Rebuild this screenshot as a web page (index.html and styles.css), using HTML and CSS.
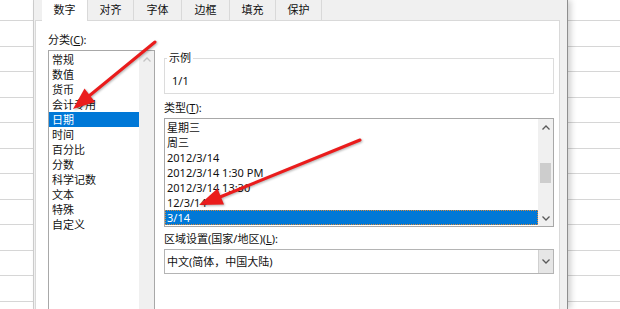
FILE: index.html
```html
<!DOCTYPE html>
<html>
<head>
    <title>设置单元格格式</title>
    <link rel="stylesheet" href="styles.css">
</head>
<body>
    <div class="sheet sheet-left"></div>

    <div class="dialog">
        <div class="tabs">
            <div class="tab active">数字</div>
            <div class="tab">对齐</div>
            <div class="tab wide">字体</div>
            <div class="tab wide">边框</div>
            <div class="tab">填充</div>
            <div class="tab">保护</div>
        </div>

        <div class="panel">
            <div class="col-left">
                <div class="label">分类(<u>C</u>):</div>
                <div class="listbox category">
                    <div class="items">
                        <div class="item">常规</div>
                        <div class="item">数值</div>
                        <div class="item">货币</div>
                        <div class="item">会计专用</div>
                        <div class="item selected">日期</div>
                        <div class="item">时间</div>
                        <div class="item">百分比</div>
                        <div class="item">分数</div>
                        <div class="item">科学记数</div>
                        <div class="item">文本</div>
                        <div class="item">特殊</div>
                        <div class="item">自定义</div>
                    </div>
                    <div class="scrollbar disabled">
                        <div class="sb-btn">
                            <svg width="8" height="5" viewBox="0 0 8 5"><polyline points="0.5,4.5 4,1 7.5,4.5"/></svg>
                        </div>
                    </div>
                </div>
            </div>

            <div class="col-right">
                <fieldset class="sample">
                    <legend>示例</legend>
                    <div class="sample-value">1/1</div>
                </fieldset>

                <div class="label gap-top">类型(<u>T</u>):</div>
                <div class="listbox types">
                    <div class="items">
                        <div class="item">星期三</div>
                        <div class="item">周三</div>
                        <div class="item">2012/3/14</div>
                        <div class="item">2012/3/14 1:30 PM</div>
                        <div class="item">2012/3/14 13:30</div>
                        <div class="item">12/3/14</div>
                        <div class="item selected focused">3/14</div>
                    </div>
                    <div class="scrollbar">
                        <div class="sb-btn">
                            <svg width="8" height="5" viewBox="0 0 8 5"><polyline points="0.5,4.5 4,1 7.5,4.5"/></svg>
                        </div>
                        <div class="sb-track">
                            <div class="sb-thumb" style="margin-top: 28px; height: 20px;"></div>
                        </div>
                        <div class="sb-btn">
                            <svg width="8" height="5" viewBox="0 0 8 5"><polyline points="0.5,0.5 4,4 7.5,0.5"/></svg>
                        </div>
                    </div>
                </div>

                <div class="label gap-top-small">区域设置(国家/地区)(<u>L</u>):</div>
                <div class="combo">
                    <div class="combo-text">中文(简体，中国大陆)</div>
                    <div class="combo-btn">
                        <svg width="8" height="5" viewBox="0 0 8 5"><polyline points="0.5,0.5 4,4 7.5,0.5"/></svg>
                    </div>
                </div>
            </div>
        </div>
    </div>

    <div class="sheet sheet-right"></div>

    <!-- red annotation arrows drawn over the screenshot -->
    <svg class="annotations" width="620" height="309" viewBox="0 0 620 309">
        <line x1="155" y1="42" x2="89" y2="96"/>
        <polygon points="73,109 95,102 84.5,88.5"/>
        <line x1="360" y1="140" x2="220" y2="197"/>
        <polygon points="199,205 224,204.5 217.5,188.5"/>
    </svg>
</body>
</html>
```

FILE: styles.css
```css
* {
    box-sizing: border-box;
}
body {
    margin: 0;
    width: 620px;
    height: 309px;
    overflow: hidden;
    display: flex;
    position: relative;
    background: #fff;
    color: #111;
    font-family: "Noto Sans", "Noto Sans CJK SC", sans-serif;
    font-size: 11px;
}
.sheet {
    height: 100%;
    background: repeating-linear-gradient(to bottom, transparent 0 24.5px, #d6d6d6 24.5px 25.5px);
    background-position: 0 -4px;
}
.sheet-left {
    width: 34px;
    border-right: 1px solid #d0d0d0;
}
.sheet-right {
    flex: 1;
}
.dialog {
    width: 534px;
    height: 100%;
    display: flex;
    flex-direction: column;
    background: #f0f0f0;
    border-right: 1px solid #8e8e8e;
    padding: 0 6px 0 1px;
    box-shadow: 3px 0 6px rgba(0, 0, 0, 0.18);
    z-index: 1;
}
.tabs {
    display: flex;
    height: 20px;
    padding-left: 7px;
}
.tab {
    width: 46px;
    height: 20px;
    line-height: 20px;
    text-align: center;
    border-right: 1px solid #d9d9d9;
    background: #f0f0f0;
}
.tab.wide {
    width: 48px;
}
.tab.active {
    background: #fff;
    height: 21px;
    position: relative;
    z-index: 2;
}
.panel {
    flex: 1;
    width: 525px;
    background: #fff;
    border: 1px solid #d9d9d9;
    border-bottom: none;
    padding: 12px 4px 0 12px;
    display: grid;
    grid-template-columns: 107px 390px;
    column-gap: 9px;
    align-items: start;
}
.label {
    line-height: 14px;
    margin-bottom: 3px;
    white-space: nowrap;
}
.label.gap-top {
    margin-top: 7px;
}
.label.gap-top-small {
    margin-top: 5px;
}
.listbox {
    display: flex;
    border: 1px solid #a8a8a8;
    background: #fff;
}
.listbox.category {
    height: 259px;
    border-bottom: none;
}
.listbox.types {
    height: 109px;
}
.items {
    flex: 1;
    padding-top: 1px;
}
.item {
    height: 15px;
    line-height: 15px;
    white-space: nowrap;
}
.category .item {
    padding-left: 3px;
}
.types .item {
    padding-left: 2px;
}
.item.selected {
    background: #0078d7;
    color: #fff;
}
.item.focused {
    outline: 1px dotted #d98a3a;
    outline-offset: -1px;
}
.scrollbar {
    width: 15px;
    display: flex;
    flex-direction: column;
    background: #f0f0f0;
}
.sb-btn {
    height: 16px;
    display: flex;
    align-items: center;
    justify-content: center;
}
.sb-btn svg polyline,
.combo-btn svg polyline {
    fill: none;
    stroke: #5a5a5a;
    stroke-width: 1.3;
}
.scrollbar.disabled .sb-btn svg polyline {
    stroke: #c4c4c4;
}
.sb-track {
    flex: 1;
    padding: 0 2px;
}
.sb-thumb {
    background: #cdcdcd;
}
.sample {
    margin: 19px 0 0;
    padding: 10px 6px 5px 7px;
    border: 1px solid #dcdcdc;
    min-width: 0;
}
.sample legend {
    line-height: 12px;
    padding: 0 2px;
    margin-left: -5px;
}
.sample-value {
    line-height: 14px;
}
.combo {
    height: 25px;
    display: flex;
    border: 1px solid #b4b4b4;
    background: #fff;
}
.combo-text {
    flex: 1;
    line-height: 23px;
    padding-left: 2px;
}
.combo-btn {
    width: 15px;
    background: #e6e6e6;
    border-left: 1px solid #d0d0d0;
    display: flex;
    align-items: center;
    justify-content: center;
}
.annotations {
    position: absolute;
    top: 0;
    left: 0;
    z-index: 5;
    pointer-events: none;
    filter: drop-shadow(1px 1px 1px rgba(0, 0, 0, 0.3));
}
.annotations line {
    stroke: #ea1c1c;
    stroke-width: 3;
    stroke-linecap: round;
}
.annotations polygon {
    fill: #ea1c1c;
}
```
